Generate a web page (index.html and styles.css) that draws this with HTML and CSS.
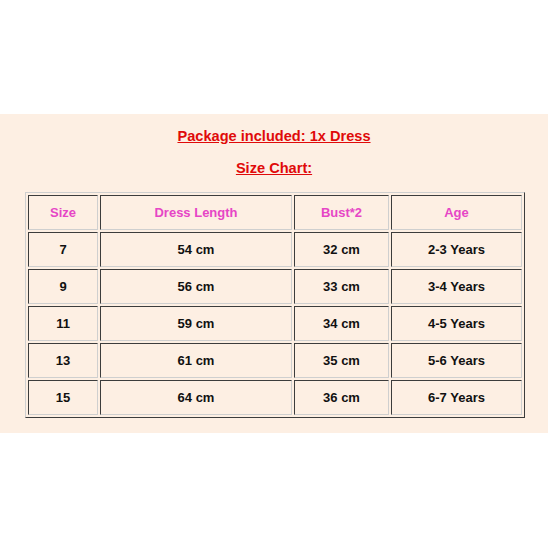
FILE: index.html
```html
<!DOCTYPE html>
<html>
<head>
<meta charset="utf-8">
<link rel="stylesheet" href="styles.css">
</head>
<body>
<div class="band">
  <p class="title">Package included: 1x Dress</p>
  <p class="title second">Size Chart:</p>
  <table class="chart">
    <colgroup>
      <col class="c1"><col class="c2"><col class="c3"><col class="c4">
    </colgroup>
    <tr class="head"><td>Size</td><td>Dress Length</td><td>Bust*2</td><td>Age</td></tr>
    <tr><td>7</td><td>54 cm</td><td>32 cm</td><td>2-3 Years</td></tr>
    <tr><td>9</td><td>56 cm</td><td>33 cm</td><td>3-4 Years</td></tr>
    <tr><td>11</td><td>59 cm</td><td>34 cm</td><td>4-5 Years</td></tr>
    <tr><td>13</td><td>61 cm</td><td>35 cm</td><td>5-6 Years</td></tr>
    <tr><td>15</td><td>64 cm</td><td>36 cm</td><td>6-7 Years</td></tr>
  </table>
</div>
</body>
</html>
```

FILE: styles.css
```css
html, body {
  margin: 0;
  padding: 0;
  background: #ffffff;
}
body {
  font-family: "Liberation Sans", Arial, sans-serif;
  width: 548px;
  height: 548px;
}
.band {
  margin-top: 114px;
  height: 319px;
  background: #fdefe3;
  padding-top: 14px;
  box-sizing: border-box;
}
.title {
  margin: 0;
  text-align: center;
  font-size: 14.6px;
  font-weight: bold;
  line-height: 16px;
  color: #e00a0a;
  text-decoration: underline;
}
.second {
  margin-top: 16px;
}
.chart {
  margin: 16px 0 0 25px;
  width: 500px;
  border-collapse: separate;
  border-spacing: 2px;
  border: 1px solid;
  border-color: #cfcfcf #3c3c3c #3c3c3c #cfcfcf;
  table-layout: fixed;
}
.c1 { width: 70px; }
.c2 { width: 192px; }
.c3 { width: 95px; }
.c4 { width: 131px; }
.chart td {
  height: 33px;
  padding: 0;
  border: 1px solid;
  border-color: #3c3c3c #cfcfcf #cfcfcf #3c3c3c;
  text-align: center;
  vertical-align: middle;
  font-size: 13px;
  font-weight: bold;
  color: #111111;
}
.chart .head td {
  color: #e646c6;
}
```
